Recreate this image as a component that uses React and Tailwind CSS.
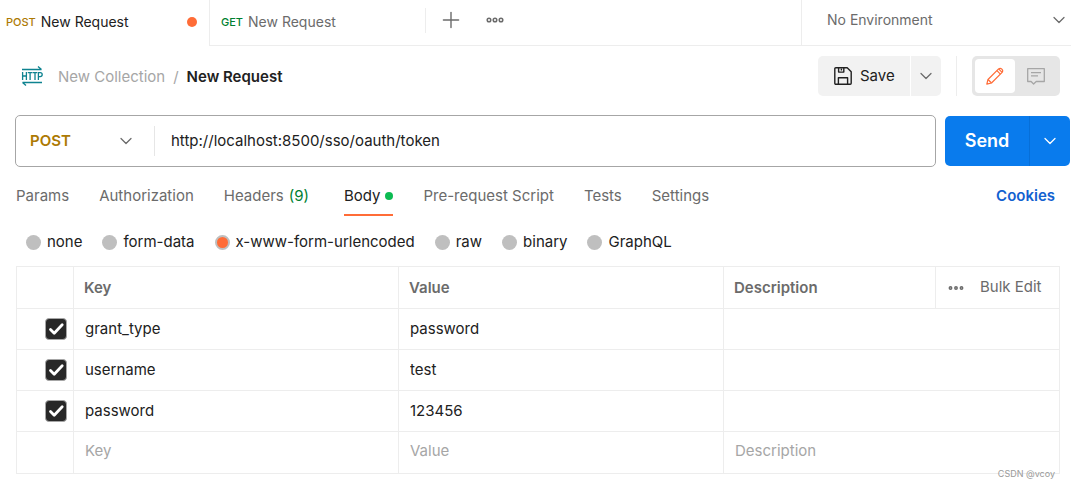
import { useState } from 'react'
import { ChevronDown, Plus } from 'lucide-react'

const tabs = ['Params', 'Authorization', 'Headers', 'Body', 'Pre-request Script', 'Tests', 'Settings']
const bodyTypes = ['none', 'form-data', 'x-www-form-urlencoded', 'raw', 'binary', 'GraphQL']
const params = [
  { key: 'grant_type', value: 'password' },
  { key: 'username', value: 'test' },
  { key: 'password', value: '123456' },
]

function Dots({ className }) {
  return (
    <svg viewBox="0 0 18 6" fill="none" stroke="currentColor" strokeWidth="1.5" className={className}>
      <circle cx="3" cy="3" r="1.8" />
      <circle cx="9" cy="3" r="1.8" />
      <circle cx="15" cy="3" r="1.8" />
    </svg>
  )
}

function SmallDots() {
  return (
    <svg width="16" height="6" viewBox="0 0 16 6" fill="none" stroke="currentColor" strokeWidth="1.5">
      <circle cx="2.5" cy="3" r="1.2" />
      <circle cx="8" cy="3" r="1.2" />
      <circle cx="13.5" cy="3" r="1.2" />
    </svg>
  )
}

function HttpIcon() {
  return (
    <svg width="22" height="20" viewBox="0 0 22 20" fill="none" stroke="#0e8390" strokeWidth="1.3">
      <path d="M1 3.5h19.5M17 0.5l3.5 3M1.5 16.5H21M5 19.5l-3.5-3" />
      <path d="M1.6 6v8M5.4 6v8M1.6 10h3.8M6.8 6.6h4.6M9.1 6.6V14M11.8 6.6h4.4M14 6.6V14M17.4 14V6.6h1.8a1.9 1.9 0 0 1 0 4h-1.8" />
    </svg>
  )
}

function SaveIcon() {
  return (
    <svg width="18" height="18" viewBox="0 0 18 18" fill="none" stroke="#212121" strokeWidth="1.4" strokeLinejoin="round">
      <path d="M0.8 1.8a1 1 0 0 1 1-1h11.4l4 4v11.4a1 1 0 0 1-1 1H1.8a1 1 0 0 1-1-1z" />
      <path d="M4.6 0.8v4.3h5.2V0.8M7.4 1.6v1.9M4.4 17.2v-6.4h9.2v6.4" />
    </svg>
  )
}

function PencilIcon() {
  return (
    <svg width="18" height="18" viewBox="0 0 18 18" fill="none" stroke="#ff6c37" strokeWidth="1.2" strokeLinejoin="round">
      <path d="M0.8 17.2l1.2-4.7L12.6 1.9a2.5 2.5 0 0 1 3.5 3.5L5.5 16z" />
      <path d="M10.9 3.6l3.5 3.5M12.6 1.9l3.5 3.5M2 12.5L5.5 16" />
    </svg>
  )
}

function CommentIcon() {
  return (
    <svg width="18" height="17" viewBox="0 0 18 17" fill="none" stroke="#a6a6a6" strokeWidth="1.3" strokeLinejoin="round">
      <path d="M0.7 0.7h16.6v12.8H9.2L6.6 16l-2.5-2.5H0.7z" />
      <path d="M4 4.6h10M4 7.8h7" />
    </svg>
  )
}

function Cell({ label, value, placeholder }) {
  return (
    <input
      type="text"
      aria-label={label}
      defaultValue={value}
      placeholder={placeholder}
      className="block w-full px-[11px] bg-transparent outline-none placeholder:text-[#a6a6a6]"
    />
  )
}

export default function App() {
  const [bodyType, setBodyType] = useState('x-www-form-urlencoded')

  return (
    <div className="pb-3 bg-white text-[15px] leading-5 text-[#212121] font-['Inter','Liberation_Sans',sans-serif]">
      {/* open requests */}
      <header className="flex h-[46px]">
        <button className="flex items-center w-[209px] pl-[6px] pr-3 pb-[2px] gap-[5px] shrink-0">
          <span className="text-[11px] font-medium text-[#ad7a03]">POST</span>
          <span className="text-sm">New Request</span>
          <span className="ml-auto size-[10px] rounded-full bg-[#ff6c37]" />
        </button>
        <div className="flex flex-1 items-center border-l border-b border-[#ededed]">
          <button className="flex items-center w-[215px] pl-[11px] pb-[2px] gap-[5px]">
            <span className="text-[11px] font-medium text-[#007f31]">GET</span>
            <span className="text-sm text-[#6b6b6b]">New Request</span>
          </button>
          <div className="flex items-center h-[25px] mb-[5px] pl-3 gap-[22px] border-l border-[#ededed] text-[#6b6b6b]">
            <button aria-label="New tab"><Plus size={26} strokeWidth={1.3} /></button>
            <button aria-label="Tab options"><Dots className="w-[18px]" /></button>
          </div>
        </div>
        <div className="relative flex w-[270px] shrink-0 border-l border-b border-[#ededed] text-[#6b6b6b]">
          <select aria-label="Environment" className="w-full pl-[25px] pb-[5px] text-sm appearance-none bg-transparent outline-none">
            <option>No Environment</option>
          </select>
          <ChevronDown size={20} strokeWidth={1.5} className="absolute right-[2px] top-[10px] pointer-events-none" />
        </div>
      </header>

      {/* breadcrumb and actions */}
      <div className="flex items-center h-10 mt-[10px] pl-[21px] pr-[11px]">
        <HttpIcon />
        <nav className="flex ml-[15px] pt-[2px] gap-2">
          <a href="#collection" className="text-[#a6a6a6]">New Collection</a>
          <span className="text-[#a6a6a6]">/</span>
          <span className="font-semibold">New Request</span>
        </nav>
        <div className="flex ml-auto h-10 gap-px">
          <button className="flex items-center w-[92px] pl-4 gap-2 rounded-l-[5px] bg-[#f2f2f2]">
            <SaveIcon />
            Save
          </button>
          <button aria-label="Save options" className="flex items-center justify-center w-[30px] rounded-r-[5px] bg-[#f2f2f2]">
            <ChevronDown size={20} strokeWidth={1.5} color="#6b6b6b" />
          </button>
        </div>
        <div className="h-10 ml-[15px] mr-[15px] border-l border-[#ededed]" />
        <div className="flex h-10 p-[3px] rounded-[5px] bg-[#e6e6e6]">
          <button aria-label="Edit" className="flex items-center justify-center w-10 rounded bg-white"><PencilIcon /></button>
          <button aria-label="Comments" className="flex items-center justify-center w-[42px]"><CommentIcon /></button>
        </div>
      </div>

      {/* request line */}
      <div className="flex items-center mt-[19px] pl-[15px] pr-px gap-[9px]">
        <div className="flex flex-1 items-center h-[52px] border border-[#a6a6a6] rounded-[5px]">
          <div className="relative flex items-center w-[139px] h-[30px] border-r border-[#e6e6e6]">
            <select aria-label="Method" className="w-full pl-[14px] font-semibold text-[#ad7a03] appearance-none bg-transparent outline-none">
              <option>POST</option>
            </select>
            <ChevronDown size={20} strokeWidth={1.5} color="#6b6b6b" className="absolute right-[18px] pointer-events-none" />
          </div>
          <input type="text" aria-label="Request URL" defaultValue="http://localhost:8500/sso/oauth/token" className="flex-1 px-4 outline-none" />
        </div>
        <div className="flex h-[50px] rounded-[5px] overflow-hidden bg-[#097bed] text-white">
          <button className="w-[84px] text-lg font-semibold">Send</button>
          <button aria-label="Send options" className="flex items-center justify-center w-[41px] border-l border-[#066fd9]">
            <ChevronDown size={20} strokeWidth={1.5} />
          </button>
        </div>
      </div>

      {/* request sections */}
      <div className="flex mt-[19px] pl-4 pr-4 gap-[30px] text-[#6b6b6b]">
        {tabs.map((tab) => (
          <button
            key={tab}
            className={tab === 'Body'
              ? 'flex items-center h-[30px] pb-2 gap-[5px] border-b-2 border-[#ff6c37] text-[#212121]'
              : 'flex items-center h-[30px] pb-[10px] gap-[5px]'}
          >
            {tab}
            {tab === 'Headers' && <span className="pr-[5px] text-[#007f31]">(9)</span>}
            {tab === 'Body' && <span className="size-2 rounded-full bg-[#0cbb52]" />}
          </button>
        ))}
        <a href="#cookies" className="ml-auto font-semibold text-[#1261d0]">Cookies</a>
      </div>

      <div className="flex mt-4 pl-[26px] gap-5">
        {bodyTypes.map((type) => (
          <label key={type} className="flex items-center gap-[6px]">
            <input
              type="radio"
              name="body-type"
              checked={bodyType === type}
              onChange={() => setBodyType(type)}
              className="size-[15px] rounded-full appearance-none bg-[#bfbfbf] checked:border-2 checked:border-[#bfbfbf] checked:bg-[#ff6c37]"
            />
            {type}
          </label>
        ))}
      </div>

      {/* body params */}
      <div className="relative mt-[14px] pl-4 pr-[11px]">
        <table className="w-full table-fixed border-collapse border border-[#ededed]">
          <colgroup>
            <col className="w-[57px]" />
            <col className="w-[325px]" />
            <col className="w-[325px]" />
            <col />
            <col className="w-[124px]" />
          </colgroup>
          <thead>
            <tr className="h-[42px] text-left text-[#6b6b6b]">
              <td className="border border-[#ededed]" />
              <th className="px-[10px] font-semibold border border-[#ededed]">Key</th>
              <th className="px-[10px] font-semibold border border-[#ededed]">Value</th>
              <th className="px-[10px] font-semibold border border-[#ededed]">Description</th>
              <td className="border border-[#ededed]">
                <div className="flex items-center pl-3 gap-4">
                  <button aria-label="Column options"><SmallDots /></button>
                  <button className="pb-[2px]">Bulk Edit</button>
                </div>
              </td>
            </tr>
          </thead>
          <tbody>
            {params.map((p) => (
              <tr key={p.key} className="h-[41px]">
                <td className="border border-[#ededed]">
                  <span className="relative block size-[22px] ml-7">
                    <input
                      type="checkbox"
                      aria-label={`Include ${p.key}`}
                      defaultChecked
                      className="peer block size-[22px] rounded appearance-none border border-[#a6a6a6] checked:bg-[#282828]"
                    />
                    <svg viewBox="0 0 22 22" fill="none" stroke="#fff" strokeWidth="2.8" strokeLinecap="round" strokeLinejoin="round" className="absolute inset-0 hidden pointer-events-none peer-checked:block">
                      <path d="M5.5 11.5l3.7 3.7 8-8.4" />
                    </svg>
                  </span>
                </td>
                <td className="border border-[#ededed]"><Cell label="Key" value={p.key} /></td>
                <td className="border border-[#ededed]"><Cell label="Value" value={p.value} /></td>
                <td colSpan={2} className="border border-[#ededed]"><Cell label="Description" /></td>
              </tr>
            ))}
            <tr className="h-[42px]">
              <td className="border border-[#ededed]" />
              <td className="pb-1 border border-[#ededed]"><Cell label="New key" placeholder="Key" /></td>
              <td className="pb-1 border border-[#ededed]"><Cell label="New value" placeholder="Value" /></td>
              <td colSpan={2} className="pb-1 border border-[#ededed]"><Cell label="New description" placeholder="Description" /></td>
            </tr>
          </tbody>
        </table>
        <span className="absolute right-4 -bottom-[10px] text-[9px] text-[#999]">CSDN @vcoy</span>
      </div>
    </div>
  )
}
